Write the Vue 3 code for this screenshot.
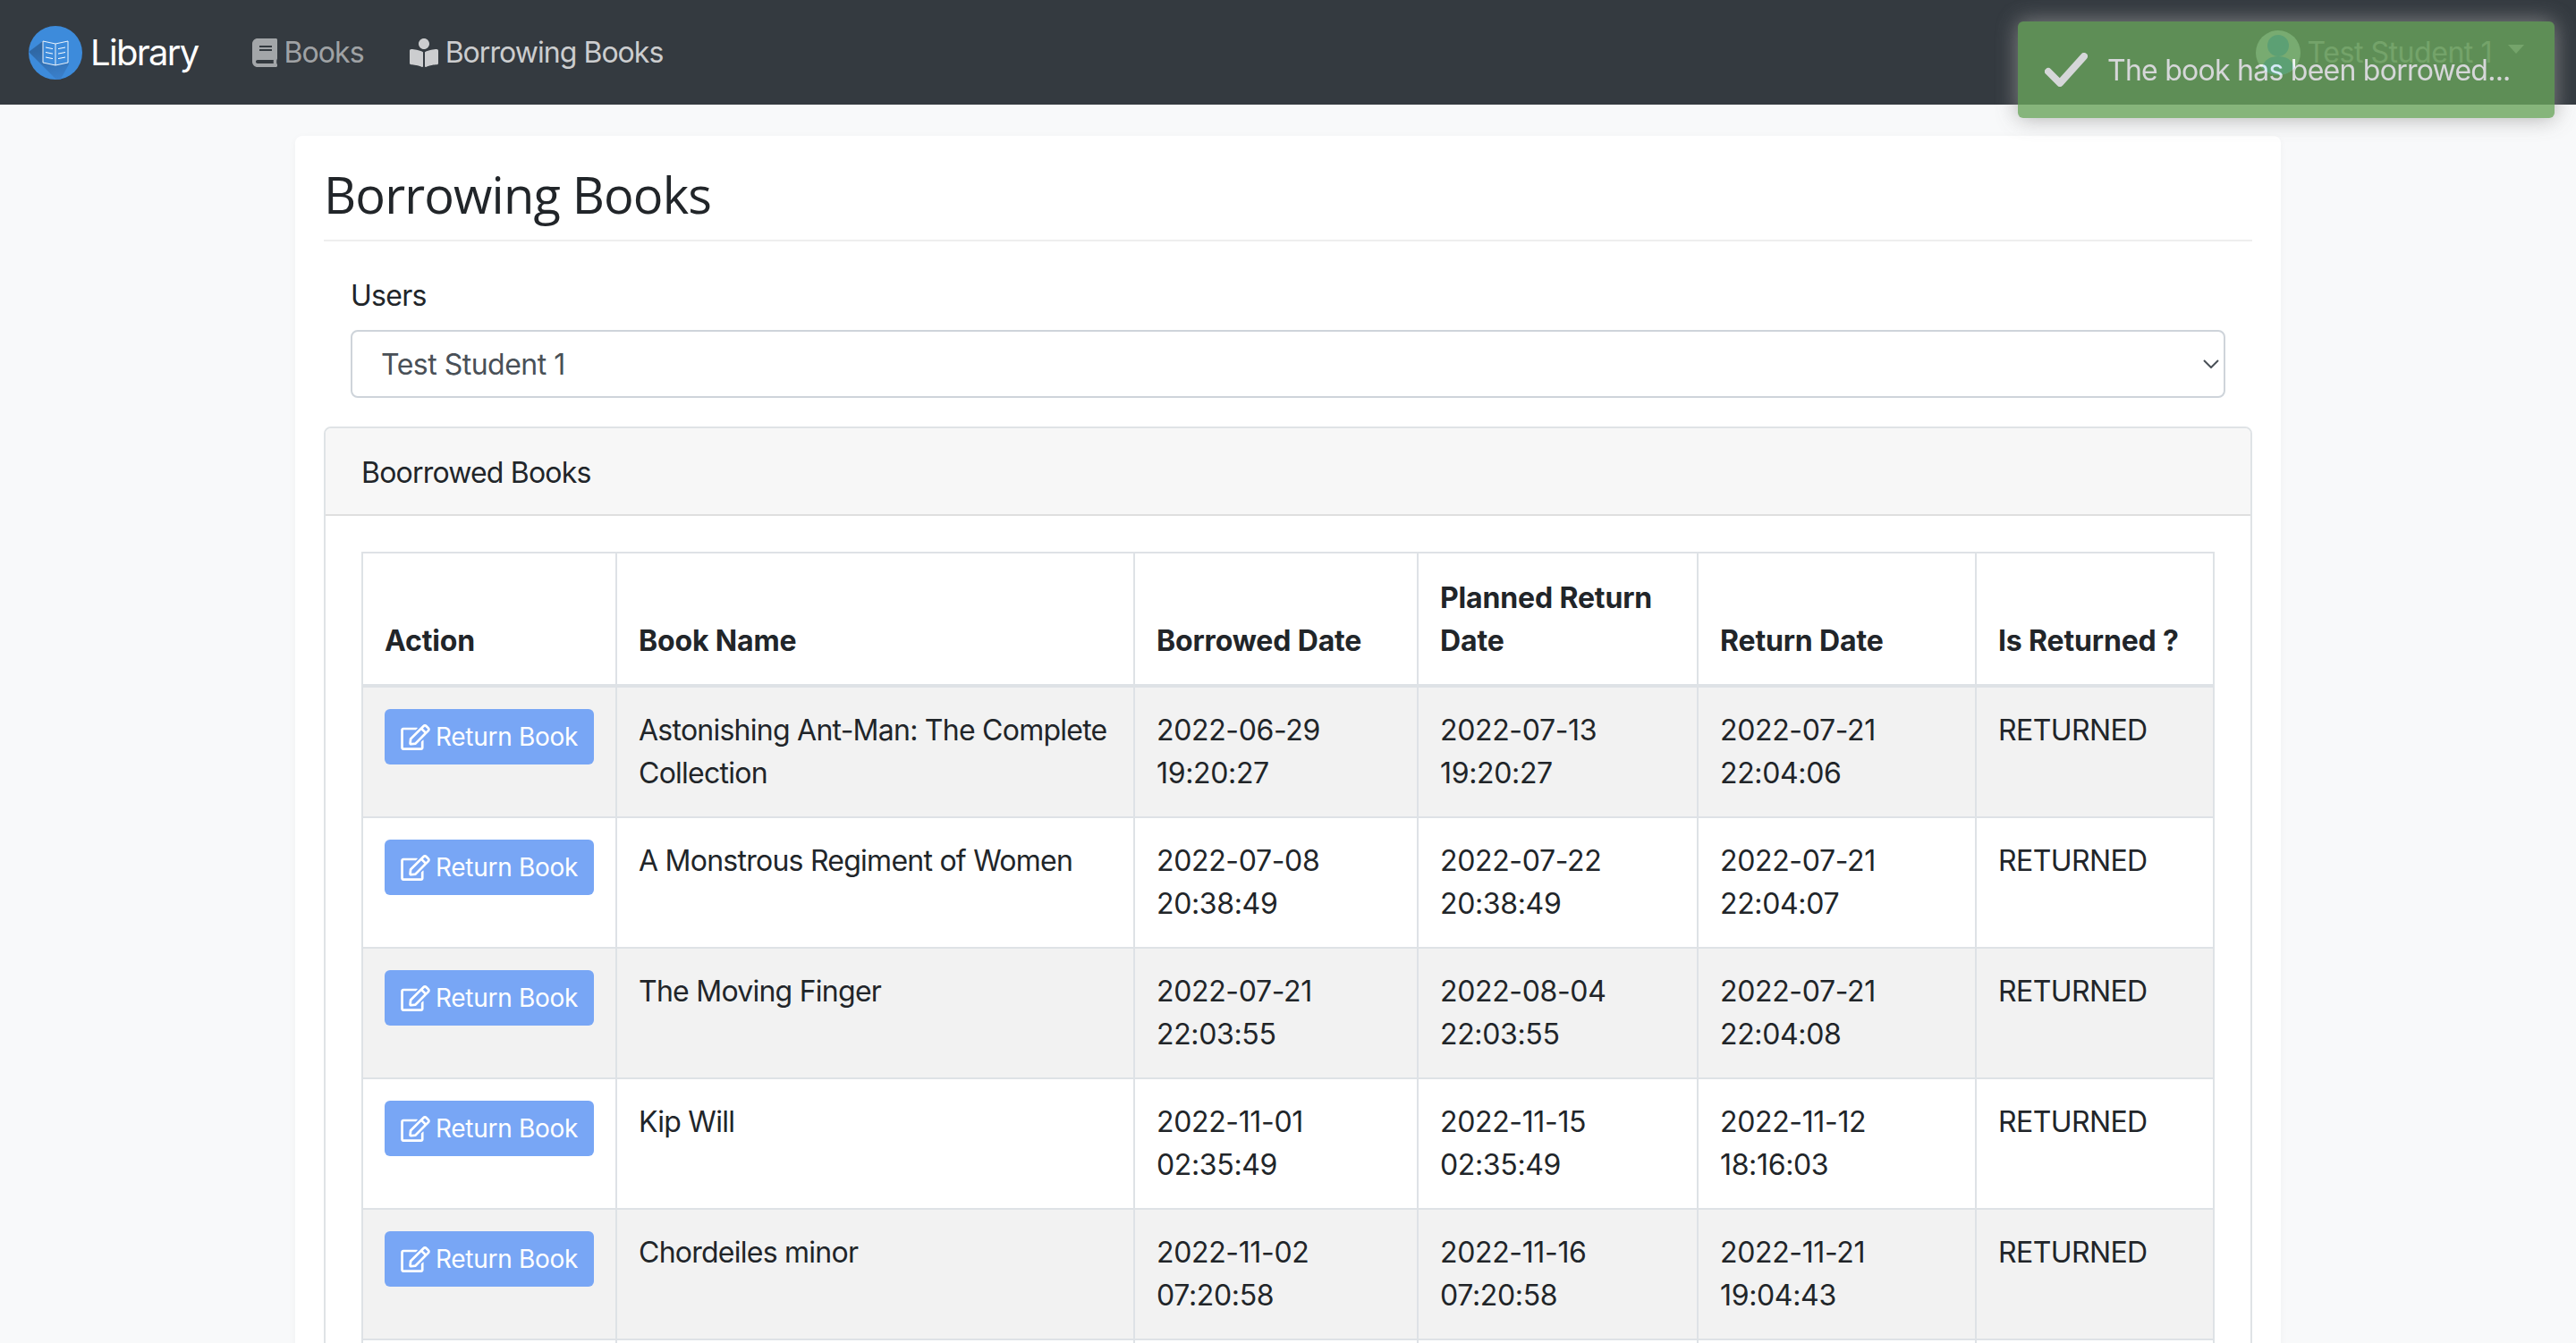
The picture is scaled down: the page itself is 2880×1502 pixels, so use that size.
<template>
  <div class="page">
    <nav class="navbar">
      <a class="brand">
        <svg class="logo" viewBox="0 0 60 60" xmlns="http://www.w3.org/2000/svg">
          <defs>
            <clipPath id="logo-clip"><circle cx="30" cy="30" r="30" /></clipPath>
            <linearGradient id="logo-shadow" x1="0.4" y1="0.2" x2="0.6" y2="1">
              <stop offset="0" stop-color="#2f68a6" />
              <stop offset="1" stop-color="#3a80cc" />
            </linearGradient>
          </defs>
          <circle cx="30" cy="30" r="30" fill="#3d8bdb" />
          <polygon clip-path="url(#logo-clip)" points="16,17 0,29 32,61 35,61 45,43 44,40" fill="url(#logo-shadow)" />
          <path d="M16 17l14 3 14-3v24l-14 3-14-3z" fill="#3d8bdb" stroke="#fff" stroke-width="0.9" />
          <path d="M30 20v24" stroke="#fff" stroke-width="0.9" />
          <path d="M19 24l8 1.6M19 29.5l8 1.6M19 35l8 1.6M41 24l-8 1.6M41 29.5l-8 1.6M41 35l-8 1.6" stroke="#fff" stroke-width="1" />
        </svg>
        <span>Library</span>
      </a>
      <a class="nav-link">
        <svg class="nav-icon" viewBox="0 0 448 512" xmlns="http://www.w3.org/2000/svg"><path fill="currentColor" d="M448 360V24c0-13.3-10.7-24-24-24H96C43 0 0 43 0 96v320c0 53 43 96 96 96h328c13.3 0 24-10.7 24-24v-16c0-7.5-3.5-14.3-8.9-18.7-4.2-15.4-4.2-59.3 0-74.7 5.4-4.3 8.9-11.1 8.9-18.6zM128 134c0-3.3 2.7-6 6-6h212c3.3 0 6 2.7 6 6v20c0 3.3-2.7 6-6 6H134c-3.3 0-6-2.7-6-6v-20zm0 64c0-3.3 2.7-6 6-6h212c3.3 0 6 2.7 6 6v20c0 3.3-2.7 6-6 6H134c-3.3 0-6-2.7-6-6v-20zm253.4 250H96c-17.7 0-32-14.3-32-32 0-17.6 14.4-32 32-32h285.4c-1.9 17.1-1.9 46.9 0 64z" /></svg>
        Books
      </a>
      <a class="nav-link active">
        <svg class="nav-icon" viewBox="0 0 512 512" xmlns="http://www.w3.org/2000/svg"><path fill="currentColor" d="M352 96c0-53.02-42.98-96-96-96s-96 42.98-96 96 42.98 96 96 96 96-42.98 96-96zM233.59 241.1c-59.33-36.32-155.43-46.3-203.79-49.05C13.55 191.13 0 203.51 0 219.14v222.8c0 14.33 11.59 26.28 26.49 27.05 43.66 2.29 131.99 10.68 193.04 41.43 9.37 4.72 20.48-1.71 20.48-11.87V252.56c-.01-4.67-2.32-8.95-6.42-11.46zm248.61-49.05c-48.35 2.74-144.46 12.73-203.78 49.05-4.1 2.51-6.41 6.96-6.41 11.63v245.79c0 10.19 11.14 16.63 20.54 11.9 61.04-30.72 149.32-39.11 192.97-41.4 14.9-.78 26.49-12.73 26.49-27.06V219.14c-.01-15.63-13.56-28.01-29.81-27.09z" /></svg>
        Borrowing Books
      </a>
      <div class="user">
        <svg class="avatar" viewBox="0 0 50 50" xmlns="http://www.w3.org/2000/svg">
          <circle cx="25" cy="25" r="25" fill="#b4c8c8" />
          <circle cx="25" cy="17" r="12" fill="#2a8fd6" />
          <path d="M7 42c2-10 10-13 18-13s16 3 18 13c-5 5-11 8-18 8s-13-3-18-8z" fill="#2a8fd6" />
        </svg>
        <span class="user-name">Test Student 1</span>
        <span class="caret"></span>
      </div>
    </nav>

    <main class="card">
      <h1 class="title">Borrowing Books</h1>

      <div class="field">
        <label class="field-label">Users</label>
        <div class="select-wrap">
          <select class="select">
            <option>Test Student 1</option>
          </select>
          <svg class="chevron" viewBox="0 0 18 10" xmlns="http://www.w3.org/2000/svg">
            <path d="M1 1l8 8 8-8" fill="none" stroke="#495057" stroke-width="2" />
          </svg>
        </div>
      </div>

      <section class="panel">
        <div class="panel-header">Boorrowed Books</div>
        <div class="panel-body">
          <table class="table">
            <colgroup>
              <col style="width: 284px" />
              <col style="width: 579px" />
              <col style="width: 317px" />
              <col style="width: 313px" />
              <col style="width: 311px" />
              <col />
            </colgroup>
            <thead>
              <tr>
                <th>Action</th>
                <th>Book Name</th>
                <th>Borrowed Date</th>
                <th>Planned Return Date</th>
                <th>Return Date</th>
                <th>Is Returned ?</th>
              </tr>
            </thead>
            <tbody>
              <tr v-for="row in rows" :key="row.name">
                <td>
                  <button class="return-btn">
                    <svg class="edit-icon" viewBox="0 0 576 512" xmlns="http://www.w3.org/2000/svg"><path fill="currentColor" d="M402.3 344.9l32-32c5-5 13.7-1.5 13.7 5.7V464c0 26.5-21.5 48-48 48H48c-26.5 0-48-21.5-48-48V112c0-26.5 21.5-48 48-48h273.5c7.1 0 10.7 8.6 5.7 13.7l-32 32c-1.5 1.5-3.5 2.3-5.7 2.3H48v352h352V350.5c0-2.1.8-4.1 2.3-5.6zm156.6-201.8L296.3 405.7l-90.4 10c-26.2 2.9-48.5-19.2-45.6-45.6l10-90.4L432.9 17.1c22.9-22.9 59.9-22.9 82.7 0l43.2 43.2c22.9 22.9 22.9 60 .1 82.8zM460.1 174L402 115.9 216.2 301.8l-7.3 65.3 65.3-7.3L460.1 174zm64.8-79.7l-43.2-43.2c-4.1-4.1-10.8-4.1-14.8 0L436 82l58.1 58.1 30.9-30.9c4-4.2 4-10.8-.1-14.9z" /></svg>
                    <span>Return Book</span>
                  </button>
                </td>
                <td class="name">{{ row.name }}</td>
                <td class="date">{{ row.borrowed }}</td>
                <td class="date">{{ row.planned }}</td>
                <td class="date">{{ row.returned }}</td>
                <td class="status">RETURNED</td>
              </tr>
              <tr class="blank-row">
                <td></td><td></td><td></td><td></td><td></td><td></td>
              </tr>
            </tbody>
          </table>
        </div>
      </section>
    </main>

    <div class="toast">
      <svg class="toast-check" viewBox="0 0 48 38" xmlns="http://www.w3.org/2000/svg">
        <path d="M4 21l13 13L44 4" fill="none" stroke="#fff" stroke-width="8" stroke-linecap="round" stroke-linejoin="round" />
      </svg>
      <span>The book has been borrowed...</span>
    </div>
  </div>
</template>

<script setup>
const rows = [
  { name: 'Astonishing Ant-Man: The Complete Collection', borrowed: '2022-06-29 19:20:27', planned: '2022-07-13 19:20:27', returned: '2022-07-21 22:04:06' },
  { name: 'A Monstrous Regiment of Women', borrowed: '2022-07-08 20:38:49', planned: '2022-07-22 20:38:49', returned: '2022-07-21 22:04:07' },
  { name: 'The Moving Finger', borrowed: '2022-07-21 22:03:55', planned: '2022-08-04 22:03:55', returned: '2022-07-21 22:04:08' },
  { name: 'Kip Will', borrowed: '2022-11-01 02:35:49', planned: '2022-11-15 02:35:49', returned: '2022-11-12 18:16:03' },
  { name: 'Chordeiles minor', borrowed: '2022-11-02 07:20:58', planned: '2022-11-16 07:20:58', returned: '2022-11-21 19:04:43' },
]
</script>

<style>
html, body {
  margin: 0;
  height: 1502px;
  overflow: hidden;
  background: #f8f9fa;
}
</style>

<style scoped>
.page {
  font-family: Inter, 'Liberation Sans', sans-serif;
  font-size: 32px;
  line-height: 48px;
  letter-spacing: -0.7px;
  color: #212529;
  background: #f8f9fa;
  height: 1502px;
  overflow: hidden;
}

/* navbar */
.navbar {
  display: flex;
  align-items: center;
  height: 117px;
  box-sizing: border-box;
  padding: 0 32px;
  background: #343a40;
}

.brand {
  display: flex;
  align-items: center;
  gap: 9px;
  font-size: 40px;
  letter-spacing: -1.7px;
  color: #fff;
  margin-right: 60px;
}

.logo {
  width: 60px;
  height: 60px;
}

.nav-link {
  display: flex;
  align-items: center;
  gap: 8px;
  letter-spacing: -0.95px;
  color: rgba(255, 255, 255, 0.55);
  margin-right: 51px;
}

.nav-link.active {
  color: rgba(255, 255, 255, 0.75);
}

.nav-icon {
  height: 32px;
  width: auto;
}

.user {
  display: flex;
  align-items: center;
  margin-left: auto;
  color: rgba(255, 255, 255, 0.55);
  margin-right: 26px;
  letter-spacing: -0.45px;
}

.avatar {
  width: 50px;
  height: 50px;
  margin-right: 8px;
}

.caret {
  width: 0;
  height: 0;
  margin-left: 18px;
  margin-bottom: 8px;
  border-top: 10px solid currentColor;
  border-left: 9px solid transparent;
  border-right: 9px solid transparent;
}

/* main card */
.card {
  width: 2220px;
  box-sizing: border-box;
  margin: 35px 0 0 330px;
  padding: 32px;
  background: #fff;
  border-radius: 8px;
  box-shadow: 0 2px 8px rgba(0, 0, 0, 0.04);
}

.title {
  margin: 0;
  padding-bottom: 18px;
  border-bottom: 2px solid #eee;
  font-family: 'Open Sans', sans-serif;
  font-size: 56px;
  font-weight: 400;
  line-height: 66px;
  letter-spacing: -0.85px;
}

.field {
  margin: 37px 30px 32px;
}

.field-label {
  display: block;
  margin-bottom: 14px;
}

.select-wrap {
  position: relative;
}

.select {
  display: block;
  width: 100%;
  height: 76px;
  box-sizing: border-box;
  padding: 2px 32px 0;
  border: 2px solid #ced4da;
  border-radius: 8px;
  background: #fff;
  font: inherit;
  letter-spacing: -0.5px;
  color: #495057;
  outline: none;
  appearance: none;
}

.chevron {
  position: absolute;
  top: 33px;
  right: 7px;
  width: 18px;
  height: 10px;
}

.panel {
  border: 2px solid #dfe3e6;
  border-radius: 8px;
}

.panel-header {
  padding: 26px 40px 0;
  height: 98px;
  box-sizing: border-box;
  background: #f7f7f7;
  border-bottom: 2px solid #dfdfdf;
  border-radius: 6px 6px 0 0;
  letter-spacing: -0.8px;
}

.panel-body {
  padding: 40px;
}

/* table */
.table {
  width: 100%;
  table-layout: fixed;
  border-collapse: collapse;
}

.table th,
.table td {
  padding: 24px;
  border: 2px solid #dee2e6;
  text-align: left;
  vertical-align: top;
}

.table th {
  padding-top: 26px;
  vertical-align: bottom;
  border-bottom-width: 4px;
  font-weight: 700;
  letter-spacing: -0.15px;
}

.table td.name {
  letter-spacing: -0.75px;
}

.table td.date {
  letter-spacing: -0.35px;
}

.table td.status {
  letter-spacing: -0.6px;
}

.table tbody tr:nth-child(odd) {
  background: #f2f2f2;
}

.blank-row td {
  height: 96px;
}

.return-btn {
  display: inline-flex;
  align-items: center;
  gap: 6px;
  width: 234px;
  height: 62px;
  padding: 0 0 0 18px;
  border: none;
  border-radius: 6px;
  background: #78a6f5;
  color: #fff;
  font: inherit;
  font-size: 28px;
  letter-spacing: -0.3px;
  white-space: nowrap;
}

.edit-icon {
  width: 33px;
  height: 29px;
  flex-shrink: 0;
}

/* toast */
.toast {
  position: fixed;
  top: 24px;
  right: 24px;
  width: 600px;
  height: 108px;
  box-sizing: border-box;
  display: flex;
  align-items: center;
  gap: 22px;
  padding-left: 30px;
  border-radius: 6px;
  background: #6aa45c;
  color: #fff;
  opacity: 0.8;
  box-shadow: 0 0 24px #999;
  letter-spacing: -0.75px;
}

.toast span {
  position: relative;
  top: 1px;
}

.toast-check {
  width: 48px;
  height: 38px;
}
</style>
